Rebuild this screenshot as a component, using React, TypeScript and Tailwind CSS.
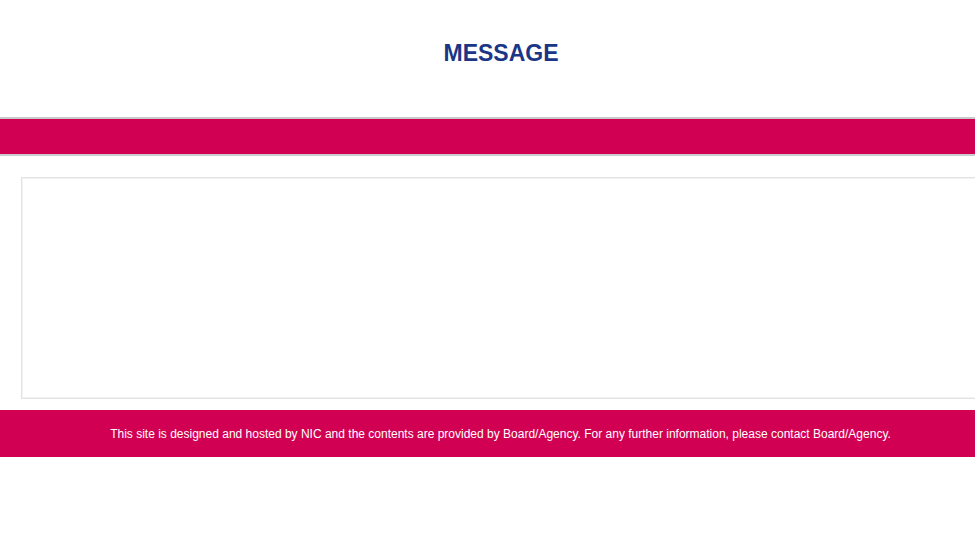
export default function App() {
  return (
    <div className="min-h-[557px] w-full overflow-hidden bg-white" style={{ fontFamily: '"Liberation Sans", Arial, sans-serif' }}>
      {/* header */}
      <div className="flex h-[117px] items-start justify-center pl-[27px] pt-[38px]">
        <h1 className="text-[23px] font-bold leading-[30px] text-[#1b3687]">MESSAGE</h1>
      </div>
      <div className="h-[2px] bg-[#c9c9c9]"></div>
      <div className="h-[35px] bg-[#d20052]"></div>
      <div className="h-[2px] bg-[#cccccc]"></div>

      {/* content */}
      <div className="pt-[21px] pb-[11px] pl-[21px]">
        <div className="h-[222px] w-[1000px] border border-[#e2e2e2] bg-white">
          <div className="h-full w-full border border-[#f4f4f4]"></div>
        </div>
      </div>

      {/* footer */}
      <div className="flex h-[47px] items-center justify-center bg-[#d20052] pl-[26px]">
        <p className="text-[12px] text-white">
          This site is designed and hosted by NIC and the contents are provided by Board/Agency. For any further information, please contact Board/Agency.
        </p>
      </div>
    </div>
  );
}
